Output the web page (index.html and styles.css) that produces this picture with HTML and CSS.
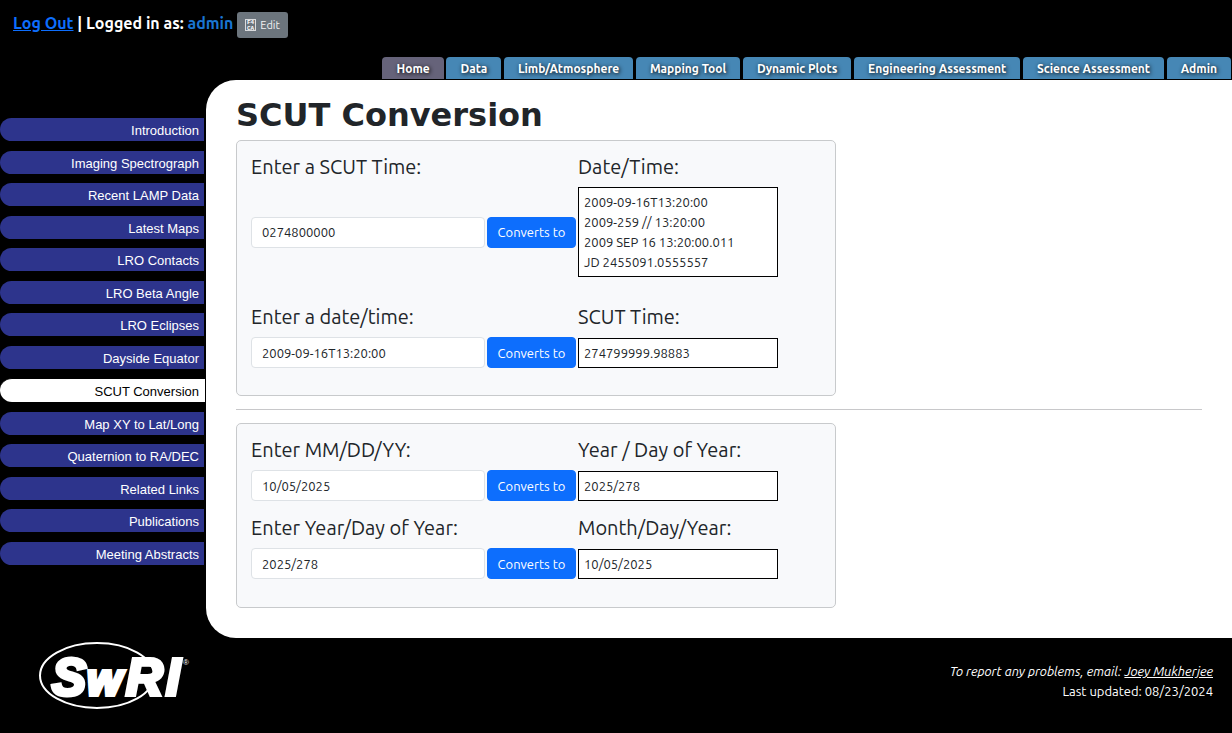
FILE: index.html
```html
<!DOCTYPE html>
<html lang="en">
<head>
<meta charset="utf-8">
<title>SCUT Conversion</title>
<link rel="stylesheet" href="styles.css">
</head>
<body>
<header class="top">
  <div class="session">
    <span><a class="logout" href="#">Log Out</a> | Logged in as: <span class="user">admin</span></span>
    <button class="edit" type="button">
      <svg width="11" height="12" viewBox="0 0 11 12" aria-hidden="true">
        <rect x="0.5" y="0.5" width="10" height="11" fill="none" stroke="#fff" stroke-opacity=".75"/>
        <text class="code" x="2" y="5">F4</text>
        <text class="code" x="2" y="11">CA</text>
      </svg>
      Edit
    </button>
  </div>
  <nav class="tabs">
    <a class="tab current" href="#">Home</a>
    <a class="tab" href="#">Data</a>
    <a class="tab" href="#">Limb/Atmosphere</a>
    <a class="tab" href="#">Mapping Tool</a>
    <a class="tab" href="#">Dynamic Plots</a>
    <a class="tab" href="#">Engineering Assessment</a>
    <a class="tab" href="#">Science Assessment</a>
    <a class="tab" href="#">Admin</a>
  </nav>
</header>
<div class="body">
  <nav class="side">
    <a class="item" href="#">Introduction</a>
    <a class="item" href="#">Imaging Spectrograph</a>
    <a class="item" href="#">Recent LAMP Data</a>
    <a class="item" href="#">Latest Maps</a>
    <a class="item" href="#">LRO Contacts</a>
    <a class="item" href="#">LRO Beta Angle</a>
    <a class="item" href="#">LRO Eclipses</a>
    <a class="item" href="#">Dayside Equator</a>
    <a class="item current" href="#">SCUT Conversion</a>
    <a class="item" href="#">Map XY to Lat/Long</a>
    <a class="item" href="#">Quaternion to RA/DEC</a>
    <a class="item" href="#">Related Links</a>
    <a class="item" href="#">Publications</a>
    <a class="item" href="#">Meeting Abstracts</a>
  </nav>
  <main class="content">
    <h1>SCUT Conversion</h1>
    <section class="card">
      <form class="convert">
        <label class="enter" for="scut">Enter a SCUT Time:</label>
        <label class="result" for="scut-out">Date/Time:</label>
        <input id="scut" type="text" value="0274800000">
        <button type="button">Converts to</button>
        <output id="scut-out" class="lines">2009-09-16T13:20:00<br>2009-259 // 13:20:00<br>2009 SEP 16 13:20:00.011<br>JD 2455091.0555557</output>
      </form>
      <form class="convert">
        <label class="enter" for="date">Enter a date/time:</label>
        <label class="result" for="date-out">SCUT Time:</label>
        <input id="date" type="text" value="2009-09-16T13:20:00">
        <button type="button">Converts to</button>
        <output id="date-out">274799999.98883</output>
      </form>
    </section>
    <hr>
    <section class="card compact">
      <form class="convert">
        <label class="enter" for="mdy">Enter MM/DD/YY:</label>
        <label class="result" for="mdy-out">Year / Day of Year:</label>
        <input id="mdy" type="text" value="10/05/2025">
        <button type="button">Converts to</button>
        <output id="mdy-out">2025/278</output>
      </form>
      <form class="convert">
        <label class="enter" for="doy">Enter Year/Day of Year:</label>
        <label class="result" for="doy-out">Month/Day/Year:</label>
        <input id="doy" type="text" value="2025/278">
        <button type="button">Converts to</button>
        <output id="doy-out">10/05/2025</output>
      </form>
    </section>
  </main>
</div>
<footer class="foot">
  <svg class="logo" width="152" height="70" viewBox="0 0 152 70" role="img" aria-label="SwRI">
    <ellipse cx="58" cy="33.500" rx="57" ry="32.500" fill="none" stroke="#fff" stroke-width="2"/>
    <g class="letters">
      <text x="13" y="53" font-size="51">S</text>
      <text x="48" y="53" font-size="45">w</text>
      <text x="87" y="53" font-size="51">R</text>
      <text x="127" y="53" font-size="51">I</text>
    </g>
    <text class="mark" x="144" y="23">®</text>
  </svg>
  <div class="notes">
    <div><em>To report any problems, email: <a href="#">Joey Mukherjee</a></em></div>
    <div>Last updated: 08/23/2024</div>
  </div>
</footer>
</body>
</html>
```
FILE: styles.css
```css
* { box-sizing: border-box; }
body {
  margin: 0;
  background: #000;
  color: #212529;
  font: 13px/20px Ubuntu, "Noto Sans", sans-serif;
}
.top { display: flex; flex-direction: column; }
.session {
  display: flex;
  align-items: flex-start;
  gap: 4px;
  padding: 12px 13px 19px;
  color: #fff;
  font-size: 16px;
  line-height: 22px;
  font-weight: 600;
}
.logout { color: #0d6efd; }
.user { color: #1a76d2; }
.edit {
  display: flex;
  align-items: center;
  gap: 4px;
  height: 26px;
  padding: 0 8px;
  border: 0;
  border-radius: 3px;
  background: #6c757d;
  color: #f0f1f2;
  font: 11px/18px Ubuntu, "Noto Sans", sans-serif;
}
.code { font: bold 6px "Liberation Mono", monospace; fill: #fff; }
.tabs { padding: 0 1px 1px 0; font-size: 12px; line-height: 22px; text-align: right; }
.tab {
  display: inline-block;
  padding: 2px 14px 0;
  border-radius: 4px 4px 0 0;
  background: #4687b5;
  color: #fff;
  line-height: 20px;
  font-weight: 600;
  text-decoration: none;
  text-shadow: 1px 1px 4px #000;
  vertical-align: top;
}
.tab.current { background: #66637a; }
.body { display: grid; grid-template-columns: 206px 1fr; }
.side {
  display: flex;
  flex-direction: column;
  justify-content: space-between;
  padding: 38px 0 73px;
}
.item {
  margin-right: 2px;
  padding: 2px 5px 0 0;
  border-radius: 12px 0 0 12px;
  background: #2d348c;
  color: #fff;
  font: 13px/21px "Liberation Sans", Arial, sans-serif;
  text-align: right;
  text-decoration: none;
}
.item.current {
  margin-right: 1px;
  padding-right: 6px;
  border-top: 1px solid #000;
  background: #fff;
  color: #000;
}
.content {
  padding: 16px 30px 30px;
  border-radius: 30px 0 0 30px;
  background: #fff;
}
h1 { margin: 0 0 6px; font: bold 32px/38px "DejaVu Sans", Verdana, sans-serif; }
.card {
  display: flex;
  flex-direction: column;
  gap: 28px;
  max-width: 600px;
  padding: 14px 14px 27px;
  border: 1px solid #c8cacc;
  border-radius: 5px;
  background: #f8f9fb;
}
.compact { gap: 15px; padding-bottom: 28px; }
.convert {
  display: grid;
  grid-template-columns: 234px 89px 200px;
  column-gap: 2px;
  row-gap: 8px;
  align-items: center;
}
.convert label { font-size: 20px; line-height: 24px; }
.result { grid-column: 3; }
.convert input, .convert button {
  height: 31px;
  padding: 0 10px;
  border: 1px solid #dee2e6;
  border-radius: 4px;
  background: #fff;
  color: #212529;
  font: 13px/20px Ubuntu, "Noto Sans", sans-serif;
}
.convert button { padding: 0; border-color: #0d6efd; background: #0d6efd; color: #fff; }
output { padding: 4px 5px; border: 1px solid #000; background: #fff; }
hr { margin: 13px 0; border: 0; border-top: 1px solid #c8c8ca; }
.foot {
  display: flex;
  justify-content: space-between;
  align-items: flex-start;
  padding: 3px 19px 0 39px;
  color: #fff;
}
.notes { padding-top: 20px; text-align: right; }
.notes a { color: #fff; }
.logo { margin-top: 1px; }
.letters, .mark { font-family: "Liberation Sans", Arial, sans-serif; fill: #fff; }
.letters { font-weight: bold; font-style: italic; stroke: #fff; stroke-width: 4; }
.mark { font-size: 8px; }
```
